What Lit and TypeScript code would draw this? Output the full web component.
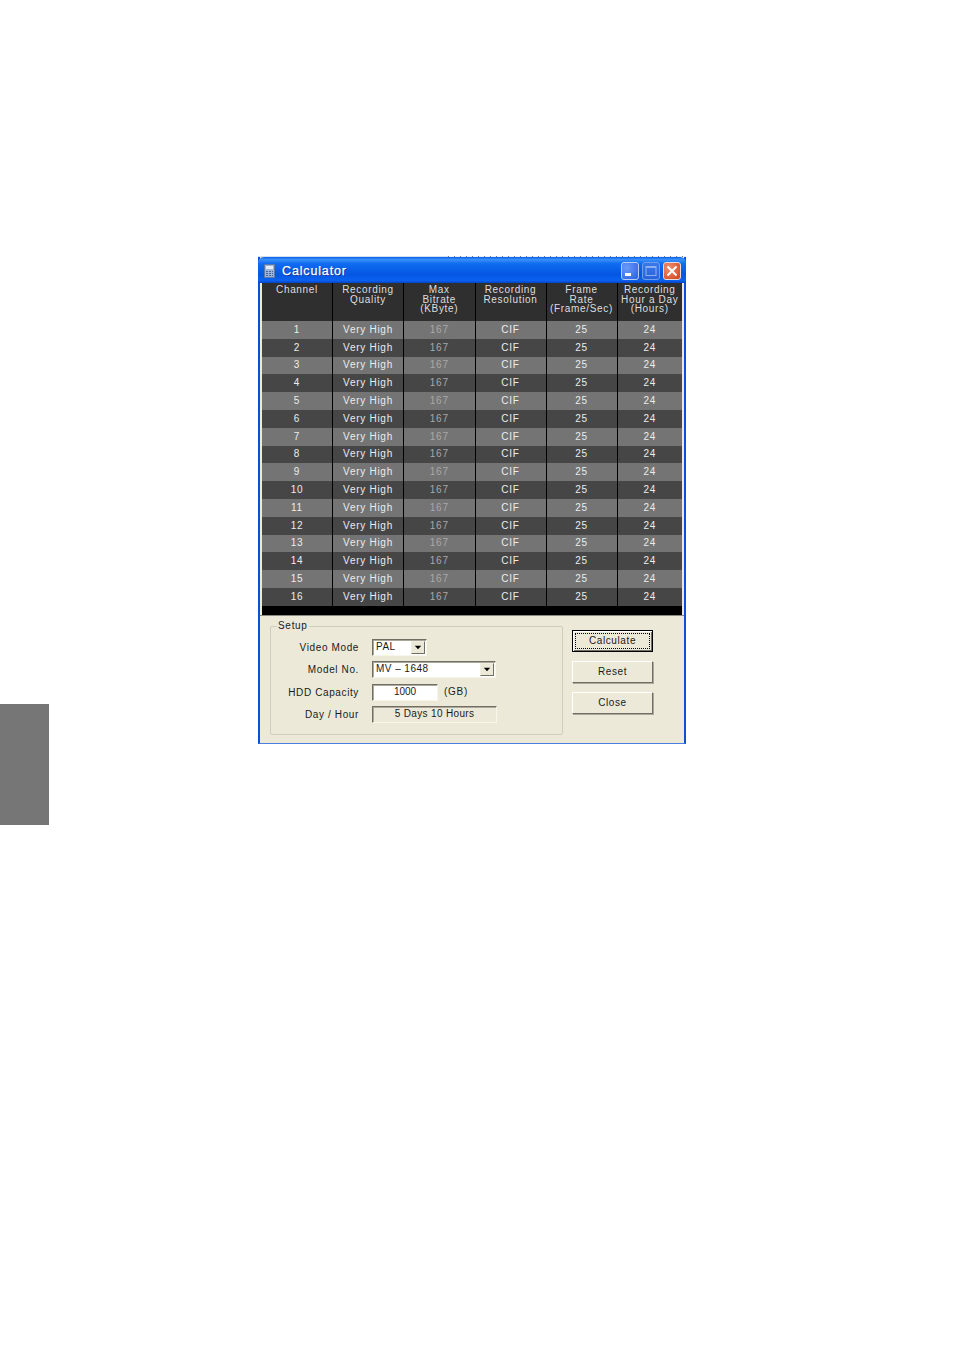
import { LitElement, html, css, svg } from "lit";
import { customElement } from "lit/decorators.js";

const rows = Array.from({ length: 16 }, (_, i) => i + 1);

@customElement("app-root")
export class AppRoot extends LitElement {
  static styles = css`
    :host { display: block; position: relative; height: 1348px; background: #fff; overflow: hidden; font-family: "Liberation Sans", Arial, sans-serif; font-size: 10px; }
    .page { padding: 256px 0 0 258px; }
    .tab { position: absolute; left: 0; top: 704px; width: 49px; height: 121px; background: #767676; }
    .frame { width: 428px; }
    .specks { height: 1px; display: flex; }
    .specks i { display: block; }
    .s1 { width: 190px; background: #d4e0f2; }
    .s2 { flex: 1; background: repeating-linear-gradient(90deg, #777 0 1px, #e8eef8 1px 6px); }
    .win { height: 487px; box-sizing: border-box; background: #ece9d8; border: solid #0a50d8; border-width: 0 2px; border-bottom: 1px solid #4a7fe0; display: flex; flex-direction: column; }
    .title { height: 26px; box-sizing: border-box; margin: 0 -2px; flex: none; border-radius: 6px 6px 0 0; background: linear-gradient(#0a5fe8 0%, #3a90fa 10%, #0f6cf0 26%, #0556e2 68%, #0a62f0 90%, #0543c4 100%); display: flex; align-items: center; padding: 1px 5px 0 6px; gap: 3px; color: #fff; }
    .title .icon { width: 11px; height: 14px; margin-right: 4px; flex: none; }
    .title .name { flex: 1; font-size: 12.5px; letter-spacing: 0.85px; text-shadow: 1px 1px 0 #0a2f90; -webkit-text-stroke: 0.25px #fff; }
    .wb { width: 18px; height: 18px; box-sizing: border-box; border: 1px solid #fff; border-radius: 3px; flex: none; display: block; }
    .wb.min { background: radial-gradient(circle at 30% 30%, #6a9cf8, #2a5ce4); border-color: #b8cdf6; }
    .wb.max { background: linear-gradient(#3a78ea, #2a62dc); border-color: #6e9cee; }
    .wb.close { background: radial-gradient(circle at 30% 30%, #f09070, #d2401a); border-color: #e8dcd8; }
    .table { margin: 0 2px; flex: none; background: #000; display: flex; flex-direction: column; height: 332px; }
    .tr { display: grid; grid-template-columns: 70px 71px 71.5px 71px 71px 65.5px; }
    .head { height: 38px; background: #2f2f2f; }
    .td { box-sizing: border-box; border-left: 1px solid #000; display: flex; align-items: center; justify-content: center; color: #ececec; letter-spacing: 0.72px; white-space: nowrap; padding-bottom: 1px; }
    .td:first-child { border-left: 0; }
    .head .td { align-items: flex-start; text-align: center; line-height: 9.5px; padding: 2px 0 0; color: #dedede; white-space: pre-line; letter-spacing: 0.68px; }
    .body { height: 284.8px; display: grid; grid-auto-rows: 17.8px; }
    .body .tr:nth-child(odd) { background: #747474; }
    .body .tr:nth-child(even) { background: #464646; }
    .dim { color: #a8a8a8; }
    .panel { flex: 1; padding: 10px 8px 0 10px; display: flex; color: #1a1a1a; border-top: 1px solid #8a8a80; }
    fieldset { width: 293px; height: 109px; box-sizing: border-box; margin: 0; padding: 0; border: 1px solid #cfcdbc; border-radius: 2px; position: relative; }
    legend { position: absolute; top: -7px; left: 6px; background: #ece9d8; padding: 0 1px; letter-spacing: 0.7px; line-height: 12px; }
    .form { padding-top: 14px; display: grid; grid-template-columns: 88px 1fr; grid-auto-rows: 22.3px; column-gap: 13px; }
    .lab { text-align: right; letter-spacing: 0.62px; line-height: 14px; }
    .val { display: flex; align-items: flex-start; gap: 7px; margin-top: -2px; }
    .field { box-sizing: border-box; height: 17px; background: #fff; border: 1px solid; border-color: #716f64 #f8f6ea #f8f6ea #716f64; box-shadow: inset 1px 1px 0 #aca899; line-height: 14px; padding-left: 3px; letter-spacing: 0.45px; display: flex; justify-content: space-between; }
    .pal { width: 55px; }
    .model { width: 124px; }
    .hdd { width: 66px; justify-content: center; padding: 0; letter-spacing: 0; }
    .day { width: 125px; background: #ece9d8; justify-content: center; padding: 0; letter-spacing: 0.35px; }
    .arrow { width: 14px; height: 13px; margin: 1px; flex: none; box-sizing: border-box; background: #ece9d8; border: 1px solid; border-color: #f1efe2 #716f64 #716f64 #f1efe2; display: block; }
    .unit { letter-spacing: 0.7px; line-height: 15px; margin-left: -1px; }
    .btns { margin-left: 9px; display: flex; flex-direction: column; gap: 9px; margin-top: 4px; }
    .btn { box-sizing: border-box; width: 81px; height: 22px; background: #ece9d8; border: 1px solid; border-color: #fff #716f64 #716f64 #fff; box-shadow: 1px 1px 0 #aca899; font: inherit; font-size: 10px; letter-spacing: 0.6px; color: #1a1a1a; padding: 0 0 2px; display: flex; align-items: center; justify-content: center; }
    .btn.def { border: 1px solid #000; outline: 1px dotted #000; outline-offset: -4px; box-shadow: inset 1px 1px 0 #fff, inset -1px -1px 0 #716f64; }
  `;

  render() {
    const arrow = svg`<path d="M3 4h7l-3.5 4z" fill="#000"/>`;
    return html`
      <div class="tab"></div>
      <div class="page">
        <div class="frame">
          <div class="specks"><i class="s1"></i><i class="s2"></i></div>
          <div class="win">
            <div class="title">
              <svg class="icon" viewBox="0 0 11 14"><rect x="0.5" y="0.5" width="10" height="13" fill="#9fb6d8" stroke="#5a78a8"/><rect x="2" y="2" width="7" height="3" fill="#e4ecf8"/><path d="M2 7h2v1H2zM5 7h2v1H5zM8 7h1v1H8zM2 9h2v1H2zM5 9h2v1H5zM8 9h1v1H8zM2 11h2v1H2zM5 11h2v1H5zM8 11h1v1H8z" fill="#3f6098"/></svg>
              <span class="name">Calculator</span>
              <svg class="wb min" viewBox="0 0 16 16"><rect x="3" y="10" width="6" height="3" fill="#fff"/></svg>
              <svg class="wb max" viewBox="0 0 16 16"><rect x="3" y="3.5" width="10" height="9" fill="none" stroke="#8cb0f0"/><rect x="3" y="3" width="10" height="2" fill="#8cb0f0"/></svg>
              <svg class="wb close" viewBox="0 0 16 16"><path d="M3.5 3.5l9 9M12.5 3.5l-9 9" stroke="#fff" stroke-width="2"/></svg>
            </div>
            <div class="table">
              <div class="tr head">
                <div class="td">Channel</div>
                <div class="td">Recording
Quality</div>
                <div class="td">Max
Bitrate
(KByte)</div>
                <div class="td">Recording
Resolution</div>
                <div class="td">Frame
Rate
(Frame/Sec)</div>
                <div class="td">Recording
Hour a Day
(Hours)</div>
              </div>
              <div class="body">
                ${rows.map(
                  (n) => html`<div class="tr">
                    <div class="td">${n}</div>
                    <div class="td">Very High</div>
                    <div class="td dim">167</div>
                    <div class="td">CIF</div>
                    <div class="td">25</div>
                    <div class="td">24</div>
                  </div>`
                )}
              </div>
            </div>
            <div class="panel">
              <fieldset>
                <legend>Setup</legend>
                <div class="form">
                  <div class="lab">Video Mode</div>
                  <div class="val"><div class="field pal">PAL<svg class="arrow" viewBox="0 0 13 12">${arrow}</svg></div></div>
                  <div class="lab">Model No.</div>
                  <div class="val"><div class="field model">MV – 1648<svg class="arrow" viewBox="0 0 13 12">${arrow}</svg></div></div>
                  <div class="lab">HDD Capacity</div>
                  <div class="val"><div class="field hdd">1000</div><span class="unit">(GB)</span></div>
                  <div class="lab">Day / Hour</div>
                  <div class="val"><div class="field day">5 Days 10 Hours</div></div>
                </div>
              </fieldset>
              <div class="btns">
                <button class="btn def">Calculate</button>
                <button class="btn">Reset</button>
                <button class="btn">Close</button>
              </div>
            </div>
          </div>
        </div>
      </div>
    `;
  }
}
